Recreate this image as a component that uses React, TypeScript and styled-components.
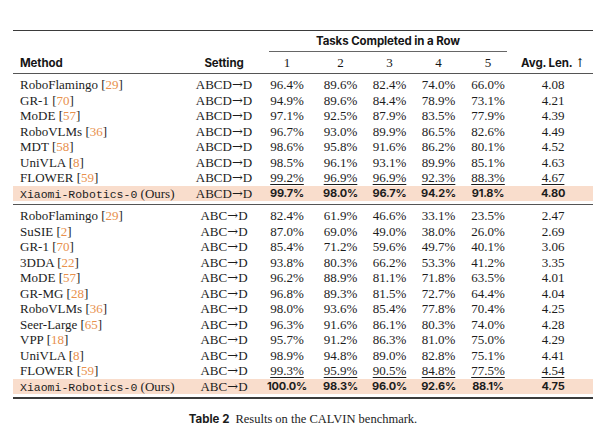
import React from 'react';
import styled, { createGlobalStyle } from 'styled-components';

const GlobalStyle = createGlobalStyle`
  body {
    margin: 0;
    background: #ffffff;
    color: #1c1c1c;
  }
`;

const COLS = '177px 68px 58px 49px 49px 49px 50px 80px';

const Page = styled.div`
  width: 580px;
  padding: 30px 0 0 13px;
`;

const Table = styled.div`
  border-top: 1.5px solid #3b3b3b;
  border-bottom: 2px solid #3b3b3b;
`;

const HeadRow = styled.div<{ $rule?: boolean }>`
  display: grid;
  grid-template-columns: ${COLS};
  height: 21px;
  align-items: center;
  font-family: Inter, 'Noto Sans', sans-serif;
  font-weight: 700;
  font-size: 11.5px;
  letter-spacing: -0.1px;
  color: #161616;
  border-bottom: ${(p) => (p.$rule ? '1px solid #555' : 'none')};
`;

const SpanHead = styled.div`
  grid-column: 3 / 8;
  align-self: stretch;
  display: flex;
  align-items: center;
  justify-content: center;
  margin: 0 6px 0 11px;
  border-bottom: 1.5px solid #666;
`;

const HeadCell = styled.div<{ $left?: boolean }>`
  text-align: ${(p) => (p.$left ? 'left' : 'center')};
  padding-left: ${(p) => (p.$left ? '7px' : '0')};
`;

const NumHead = styled(HeadCell)`
  font-family: 'Liberation Serif', serif;
  font-weight: 400;
  font-size: 13px;
`;

// math-style arrow, wider than the text face's own glyph
const Arrow = styled.span<{ $size?: number }>`
  font-family: 'DejaVu Serif', 'DejaVu Sans', serif;
  font-weight: 400;
  font-size: ${(p) => p.$size ?? 13}px;
  letter-spacing: 0;
`;

const Group = styled.div<{ $rule?: boolean }>`
  padding: 3px 0;
  border-bottom: ${(p) => (p.$rule ? '1.2px solid #555' : 'none')};
`;

const Row = styled.div<{ $ours?: boolean }>`
  display: grid;
  grid-template-columns: ${COLS};
  height: 15.5px;
  align-items: center;
  font-family: 'Liberation Serif', serif;
  font-size: 13px;
  line-height: 15.5px;
  background: ${(p) => (p.$ours ? '#f9ddcc' : 'transparent')};
`;

const Cell = styled.div<{ $left?: boolean; $second?: boolean; $best?: boolean }>`
  text-align: ${(p) => (p.$left ? 'left' : 'center')};
  padding-left: ${(p) => (p.$left ? '7px' : '0')};
  white-space: nowrap;
  text-decoration: ${(p) => (p.$second ? 'underline' : 'none')};
  text-decoration-thickness: 1px;
  text-underline-offset: 2px;
  font-family: ${(p) => (p.$best ? "Inter, 'Noto Sans', sans-serif" : 'inherit')};
  font-weight: ${(p) => (p.$best ? 700 : 400)};
  font-size: ${(p) => (p.$best ? '11px' : 'inherit')};
  letter-spacing: ${(p) => (p.$best ? '-0.2px' : 'normal')};
`;

const Cite = styled.span`
  color: #e8904c;
`;

const Mono = styled.span`
  font-family: 'Liberation Mono', monospace;
  font-size: 11.5px;
`;

const Caption = styled.div`
  margin-top: 13px;
  text-align: center;
  font-family: 'Liberation Serif', serif;
  font-size: 12.5px;
`;

const CaptionLabel = styled.span`
  font-family: Inter, 'Noto Sans', sans-serif;
  font-weight: 700;
  font-size: 11.5px;
  margin-right: 6px;
`;

type Entry = [string, string, string[], string];

const abcd: Entry[] = [
  ['RoboFlamingo', '29', ['96.4%', '89.6%', '82.4%', '74.0%', '66.0%'], '4.08'],
  ['GR-1', '70', ['94.9%', '89.6%', '84.4%', '78.9%', '73.1%'], '4.21'],
  ['MoDE', '57', ['97.1%', '92.5%', '87.9%', '83.5%', '77.9%'], '4.39'],
  ['RoboVLMs', '36', ['96.7%', '93.0%', '89.9%', '86.5%', '82.6%'], '4.49'],
  ['MDT', '58', ['98.6%', '95.8%', '91.6%', '86.2%', '80.1%'], '4.52'],
  ['UniVLA', '8', ['98.5%', '96.1%', '93.1%', '89.9%', '85.1%'], '4.63'],
  ['FLOWER', '59', ['99.2%', '96.9%', '96.9%', '92.3%', '88.3%'], '4.67'],
];

const abc: Entry[] = [
  ['RoboFlamingo', '29', ['82.4%', '61.9%', '46.6%', '33.1%', '23.5%'], '2.47'],
  ['SuSIE', '2', ['87.0%', '69.0%', '49.0%', '38.0%', '26.0%'], '2.69'],
  ['GR-1', '70', ['85.4%', '71.2%', '59.6%', '49.7%', '40.1%'], '3.06'],
  ['3DDA', '22', ['93.8%', '80.3%', '66.2%', '53.3%', '41.2%'], '3.35'],
  ['MoDE', '57', ['96.2%', '88.9%', '81.1%', '71.8%', '63.5%'], '4.01'],
  ['GR-MG', '28', ['96.8%', '89.3%', '81.5%', '72.7%', '64.4%'], '4.04'],
  ['RoboVLMs', '36', ['98.0%', '93.6%', '85.4%', '77.8%', '70.4%'], '4.25'],
  ['Seer-Large', '65', ['96.3%', '91.6%', '86.1%', '80.3%', '74.0%'], '4.28'],
  ['VPP', '18', ['95.7%', '91.2%', '86.3%', '81.0%', '75.0%'], '4.29'],
  ['UniVLA', '8', ['98.9%', '94.8%', '89.0%', '82.8%', '75.1%'], '4.41'],
  ['FLOWER', '59', ['99.3%', '95.9%', '90.5%', '84.8%', '77.5%'], '4.54'],
];

const ours: Record<string, [string[], string]> = {
  ABCD: [['99.7%', '98.0%', '96.7%', '94.2%', '91.8%'], '4.80'],
  ABC: [['100.0%', '98.3%', '96.0%', '92.6%', '88.1%'], '4.75'],
};

const Setting: React.FC<{ from: string }> = ({ from }) => (
  <Cell>
    {from}
    <Arrow>→</Arrow>D
  </Cell>
);

const Block: React.FC<{ from: string; rows: Entry[]; rule?: boolean }> = ({ from, rows, rule }) => {
  const [best, bestAvg] = ours[from];
  return (
    <Group $rule={rule}>
      {rows.map(([name, ref, vals, avg], i) => {
        const second = i === rows.length - 1;
        return (
          <Row key={name + i}>
            <Cell $left>
              {name} [<Cite>{ref}</Cite>]
            </Cell>
            <Setting from={from} />
            {vals.map((v, j) => (
              <Cell key={j} $second={second}>{v}</Cell>
            ))}
            <Cell $second={second}>{avg}</Cell>
          </Row>
        );
      })}
      <Row $ours>
        <Cell $left>
          <Mono>Xiaomi-Robotics-0</Mono> (Ours)
        </Cell>
        <Setting from={from} />
        {best.map((v, j) => (
          <Cell key={j} $best>{v}</Cell>
        ))}
        <Cell $best>{bestAvg}</Cell>
      </Row>
    </Group>
  );
};

export default function App() {
  return (
    <Page>
      <GlobalStyle />
      <Table>
        <HeadRow>
          <SpanHead>Tasks Completed in a Row</SpanHead>
        </HeadRow>
        <HeadRow $rule>
          <HeadCell $left>Method</HeadCell>
          <HeadCell>Setting</HeadCell>
          {['1', '2', '3', '4', '5'].map((n) => (
            <NumHead key={n}>{n}</NumHead>
          ))}
          <HeadCell>
            Avg. Len. <Arrow $size={12}>↑</Arrow>
          </HeadCell>
        </HeadRow>
        <Block from="ABCD" rows={abcd} rule />
        <Block from="ABC" rows={abc} />
      </Table>
      <Caption>
        <CaptionLabel>Table 2</CaptionLabel>
        Results on the CALVIN benchmark.
      </Caption>
    </Page>
  );
}
